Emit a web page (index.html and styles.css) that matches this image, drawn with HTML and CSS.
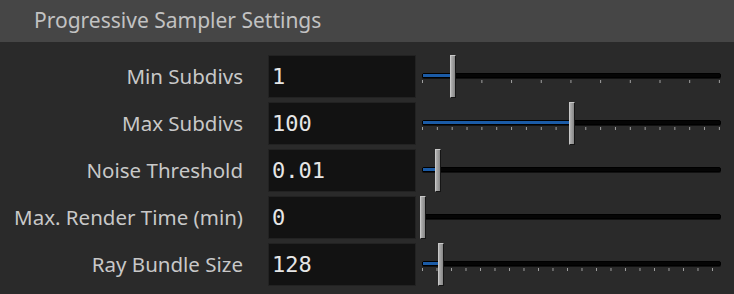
FILE: index.html
```html
<!DOCTYPE html>
<html lang="en">
<head>
    <meta charset="UTF-8">
    <title>Progressive Sampler Settings</title>
    <link rel="stylesheet" href="styles.css">
</head>
<body>

    <header class="panel-header">Progressive Sampler Settings</header>

    <div class="settings">
        <div class="row">
            <label>Min Subdivs</label>
            <div class="value">1</div>
            <div class="slider">
                <div class="track"><div class="fill" style="width: 28px"></div></div>
                <div class="ticks ticks-10"></div>
                <div class="handle" style="left: 28px"></div>
            </div>
        </div>

        <div class="row">
            <label>Max Subdivs</label>
            <div class="value">100</div>
            <div class="slider">
                <div class="track"><div class="fill" style="width: 148px"></div></div>
                <div class="ticks ticks-20"></div>
                <div class="handle" style="left: 147px"></div>
            </div>
        </div>

        <div class="row">
            <label>Noise Threshold</label>
            <div class="value">0.01</div>
            <div class="slider">
                <div class="track"><div class="fill" style="width: 14px"></div></div>
                <div class="handle" style="left: 13px"></div>
            </div>
        </div>

        <div class="row">
            <label>Max. Render Time (min)</label>
            <div class="value">0</div>
            <div class="slider">
                <div class="track"></div>
                <div class="handle" style="left: -2px"></div>
            </div>
        </div>

        <div class="row">
            <label>Ray Bundle Size</label>
            <div class="value">128</div>
            <div class="slider">
                <div class="track"><div class="fill" style="width: 16px"></div></div>
                <div class="ticks ticks-20s"></div>
                <div class="handle" style="left: 16px"></div>
            </div>
        </div>
    </div>

</body>
</html>
```

FILE: styles.css
```css
body {
    font-family: "Noto Sans", sans-serif;
    background-color: #2a2a2a;
    color: #c4c4c4;
    margin: 0;
    padding: 0;
}
.panel-header {
    background-color: #464646;
    height: 42px;
    line-height: 40px;
    padding-left: 34px;
    font-size: 21px;
    color: #c2c2c2;
}
.settings {
    display: grid;
    grid-template-columns: 268px 154px 299px;
    row-gap: 4px;
    padding-top: 13px;
}
.row {
    display: contents;
}
.row label {
    height: 43px;
    line-height: 43px;
    padding-right: 25px;
    text-align: right;
    font-size: 20.5px;
    color: #c8c8c8;
    white-space: nowrap;
}
.value {
    height: 41px;
    width: 143px;
    line-height: 41px;
    background-color: #121212;
    border: 1px solid #222;
    padding-left: 3px;
    font-family: "DejaVu Sans Mono", monospace;
    font-size: 22px;
    color: #e6e6e6;
}
.slider {
    position: relative;
    height: 43px;
}
.track {
    position: absolute;
    left: 0;
    right: 0;
    top: 18px;
    height: 3px;
    background-color: #050505;
    border: 1px solid #000;
    border-radius: 2px;
    box-shadow: 0 1px 0 #111;
}
.fill {
    height: 3px;
    background-color: #1b5ba6;
}
.ticks {
    position: absolute;
    left: 0;
    top: 25px;
    height: 3px;
    width: 298px;
    background-image: linear-gradient(to right, #a0a0a0 1px, transparent 1px);
}
.ticks-10 {
    background-size: 29.7px 3px;
}
.ticks-20 {
    background-size: 14.85px 3px;
}
.ticks-20s {
    width: 292px;
    background-size: 14.5px 3px;
}
.handle {
    position: absolute;
    top: 0;
    width: 4px;
    height: 41px;
    background: linear-gradient(to right, #b0b0b0, #979797 60%, #868686);
    border: 1px solid #151515;
    border-top-color: #c8c8c8;
    border-left-color: #c8c8c8;
}
```
